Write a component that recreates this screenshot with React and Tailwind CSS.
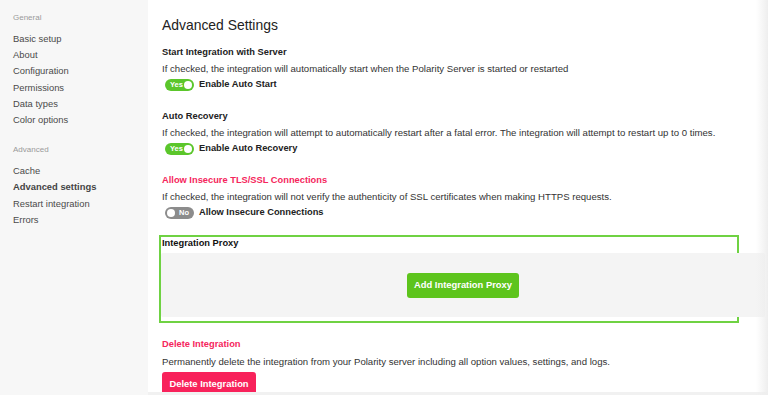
const general = ["Basic setup", "About", "Configuration", "Permissions", "Data types", "Color options"];
const advanced = ["Cache", "Advanced settings", "Restart integration", "Errors"];

const Toggle = ({ on }) =>
  on ? (
    <span className="ml-[3px] flex h-[12px] w-[29px] items-center justify-between rounded-full bg-[#5bc62b] pl-[5px] pr-[2px]">
      <span className="text-[7.5px] font-bold leading-none text-white">Yes</span>
      <span className="h-[8px] w-[8px] rounded-full bg-white" />
    </span>
  ) : (
    <span className="ml-[3px] flex h-[12px] w-[29px] items-center justify-between rounded-full bg-[#8c8c8c] pl-[2px] pr-[5px]">
      <span className="h-[8px] w-[8px] rounded-full bg-white" />
      <span className="text-[7.5px] font-bold leading-none text-white">No</span>
    </span>
  );

const Setting = ({ title, desc, label, on, danger }) => (
  <section className="mt-[10px] [&+section]:mt-[17px]">
    <h3 className={`text-[9.3px] font-bold leading-[14px] ${danger ? "text-[#f5265c]" : "text-[#222]"}`}>{title}</h3>
    <p className="mt-[3px] text-[9.6px] leading-[14px] text-[#333]">{desc}</p>
    <div className="mt-[2px] flex h-[14px] items-center gap-[5px]">
      <Toggle on={on} />
      <span className="text-[9.3px] font-bold text-[#222]">{label}</span>
    </div>
  </section>
);

export default function App() {
  return (
    <div className="relative flex h-[395px] w-[768px] overflow-hidden bg-white font-['Liberation_Sans',Arial,sans-serif]">
      <aside className="w-[148px] shrink-0 bg-[#f7f7f7] px-[13px] pt-[12px]">
        <div className="text-[8px] leading-[12px] text-[#9a9a9a]">General</div>
        <ul className="mt-[7px]">
          {general.map((g) => (
            <li key={g} className="text-[9.4px] leading-[16.2px] text-[#4a4a4a]">{g}</li>
          ))}
        </ul>
        <div className="mt-[16px] text-[8px] leading-[12px] text-[#9a9a9a]">Advanced</div>
        <ul className="mt-[7px]">
          {advanced.map((a) => (
            <li
              key={a}
              className={`text-[9.4px] leading-[16.2px] ${a === "Advanced settings" ? "font-bold text-[#444]" : "text-[#4a4a4a]"}`}
            >
              {a}
            </li>
          ))}
        </ul>
      </aside>

      <main className="flex-1 pl-[14px] pt-[15px]">
        <h1 className="text-[13.9px] leading-[20px] text-[#222]">Advanced Settings</h1>

        <Setting
          title="Start Integration with Server"
          desc="If checked, the integration will automatically start when the Polarity Server is started or restarted"
          label="Enable Auto Start"
          on
        />
        <Setting
          title="Auto Recovery"
          desc="If checked, the integration will attempt to automatically restart after a fatal error. The integration will attempt to restart up to 0 times."
          label="Enable Auto Recovery"
          on
        />
        <Setting
          title="Allow Insecure TLS/SSL Connections"
          desc="If checked, the integration will not verify the authenticity of SSL certificates when making HTTPS requests."
          label="Allow Insecure Connections"
          danger
        />

        <div className="-ml-[3px] mt-[15px] w-[580px] border-2 border-[#6fd243] pb-[4px]">
          <h3 className="pl-[1px] text-[9.3px] font-bold leading-[12px] text-[#111]">Integration Proxy</h3>
          <div className="mt-[4px] flex h-[64px] w-[604px] items-center justify-center rounded-[2px] bg-[#f4f4f4]">
            <button className="h-[25px] w-[112px] rounded-[3px] bg-[#5dc41c] text-[9.4px] font-bold text-white">
              Add Integration Proxy
            </button>
          </div>
        </div>

        <h3 className="mt-[14px] text-[9.3px] font-bold leading-[14px] text-[#f5265c]">Delete Integration</h3>
        <p className="mt-[4px] text-[9.6px] leading-[14px] text-[#333]">
          Permanently delete the integration from your Polarity server including all option values, settings, and logs.
        </p>
        <button className="mt-[3px] h-[24px] w-[94px] rounded-[3px] bg-[#f8225b] text-[9.4px] font-bold text-white">
          Delete Integration
        </button>
      </main>

      <div className="absolute bottom-0 left-[148px] right-0 h-[3px] bg-[#f1f1f1]" />
      <div className="absolute right-0 top-0 h-full w-[12px] bg-gradient-to-r from-transparent to-[#eeeeee]" />
    </div>
  );
}
